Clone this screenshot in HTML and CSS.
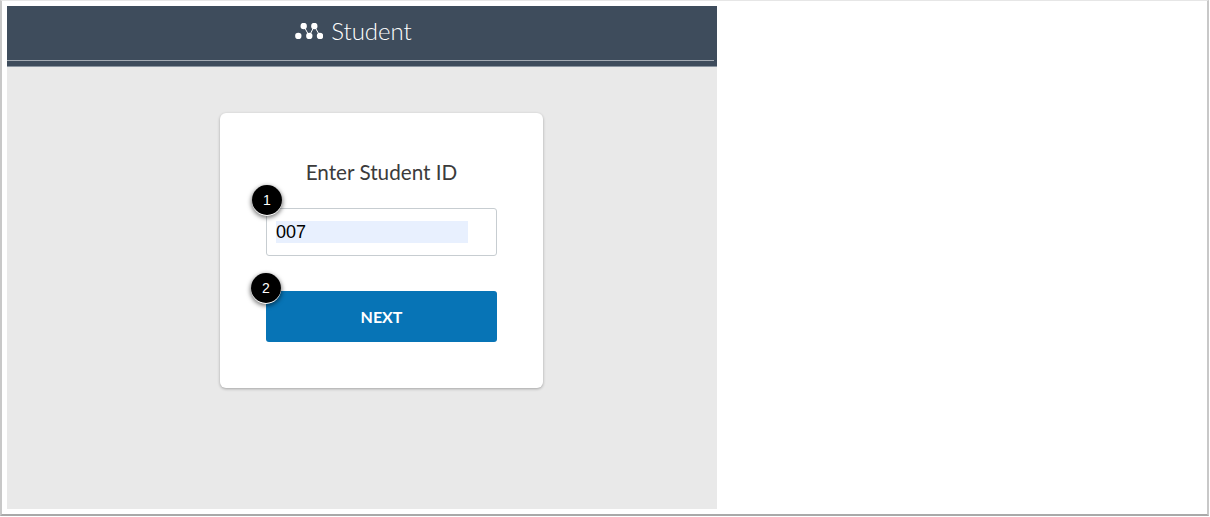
FILE: index.html
```html
<!DOCTYPE html>
<html>
<head>
<meta charset="utf-8">
<title>Student</title>
<link rel="stylesheet" href="styles.css">
</head>
<body>
  <div id="frame">
    <div id="panel">
      <header id="top-bar">
        <div class="brand">
          <svg class="logo" width="28" height="16" viewBox="0 0 28 16">
            <path d="M8.7 3L14.3 13L19.3 3L25 13" fill="none" stroke="#fff" stroke-width="1"/>
            <g fill="#fff">
              <circle cx="3.3" cy="13" r="3.2"/>
              <circle cx="8.7" cy="3" r="3.2"/>
              <circle cx="14.3" cy="13" r="3.2"/>
              <circle cx="19.3" cy="3" r="3.2"/>
              <circle cx="25" cy="13" r="3.2"/>
            </g>
          </svg>
          <span class="brand-name">Student</span>
        </div>
        <div class="bar-rule"></div>
      </header>
      <main id="content">
        <section class="card">
          <h1 class="card-title">Enter Student ID</h1>
          <div class="field">
            <span class="step">1</span>
            <div class="input-box"><span class="input-fill">007</span></div>
          </div>
          <div class="field">
            <span class="step step-next">2</span>
            <button class="next-btn">NEXT</button>
          </div>
        </section>
      </main>
    </div>
  </div>
</body>
</html>
```

FILE: styles.css
```css
html, body {
  margin: 0;
  height: 100%;
  background: #fff;
  overflow: hidden;
}

#frame {
  box-sizing: border-box;
  width: 1209px;
  height: 516px;
  padding: 5px 0 4px 5px;
  border-top: 1px solid #e6e6e6;
  border-left: 2px solid #c8c8c8;
  border-right: 2px solid #c8c8c8;
  border-bottom: 2px solid #a9a9a9;
}

#panel {
  width: 710px;
  height: 503px;
  display: flex;
  flex-direction: column;
  background: #e9e9e9;
}

#top-bar {
  height: 60px;
  flex: none;
  background: #3e4c5c;
  border-bottom: 1px solid #8b95a0;
  display: flex;
  flex-direction: column;
}

.brand {
  box-sizing: border-box;
  height: 54px;
  padding: 0 17px 4px 0;
  display: flex;
  align-items: center;
  justify-content: center;
  gap: 8px;
  color: #fff;
}

.logo {
  display: block;
}

.brand-name {
  font-family: "Lato", sans-serif;
  font-size: 24px;
  font-weight: 300;
  margin-top: -2px;
}

.bar-rule {
  width: 707px;
  height: 1px;
  background: #a4abb3;
}

#content {
  flex: 1;
  padding-top: 46px;
}

.card {
  box-sizing: border-box;
  width: 323px;
  height: 275px;
  margin-left: 213px;
  padding: 46px 46px 0;
  background: #fff;
  border-radius: 6px;
  box-shadow: 0 1px 3px rgba(0, 0, 0, 0.3);
}

.card-title {
  margin: 0 0 22px;
  height: 27px;
  line-height: 27px;
  font-family: "Lato", sans-serif;
  font-size: 20.7px;
  font-weight: 400;
  color: #3b3b3b;
  text-align: center;
}

.field {
  position: relative;
  margin-bottom: 35px;
}

.step {
  position: absolute;
  left: -14px;
  top: -23px;
  width: 30px;
  height: 30px;
  border-radius: 50%;
  background: #000;
  box-shadow: 0 1px 0 0 #fff, 0 2px 4px 1px rgba(0, 0, 0, 0.5);
  color: #fff;
  font-family: "Liberation Sans", sans-serif;
  font-size: 14px;
  line-height: 30px;
  text-align: center;
  z-index: 1;
}

.step-next {
  left: -15px;
  top: -18px;
}

.input-box {
  box-sizing: border-box;
  width: 231px;
  height: 48px;
  padding: 12px 28px 0 9px;
  background: #fff;
  border: 1px solid #c7cdd1;
  border-radius: 3px;
}

.input-fill {
  display: block;
  height: 22px;
  line-height: 22px;
  background: #e8f0fe;
  font-family: "Liberation Sans", sans-serif;
  font-size: 18px;
  color: #000;
}

.next-btn {
  display: block;
  width: 231px;
  height: 51px;
  padding: 0;
  background: #0774b6;
  border: 0;
  border-radius: 3px;
  color: #fff;
  font-family: "Lato", sans-serif;
  font-size: 16px;
  font-weight: 700;
}
```
